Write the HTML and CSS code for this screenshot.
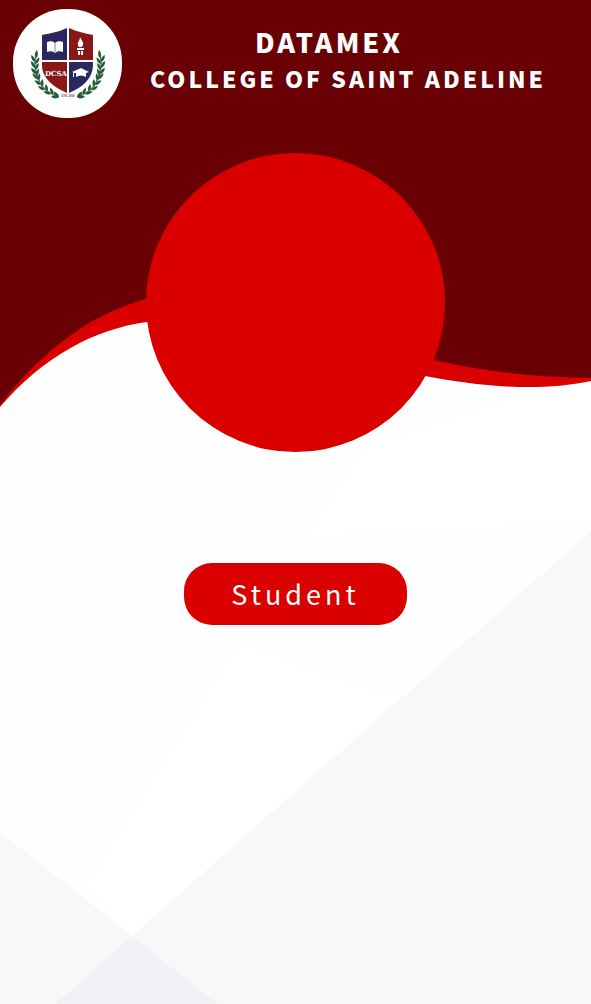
FILE: index.html
```html
<!DOCTYPE html>
<html lang="en">
<head>
<meta charset="utf-8">
<meta name="viewport" content="width=device-width, initial-scale=1">
<title>Datamex College of Saint Adeline</title>
<link rel="stylesheet" href="styles.css">
</head>
<body>
<main class="card">
  <svg class="backdrop" viewBox="0 0 591 1004" preserveAspectRatio="none" aria-hidden="true">
    <path fill="#fefefe" d="M0 300H591V1004H0Z"/>
    <path fill="#fff" d="M240 644L392 700L132 936L88 885ZM365 450L591 370V522L308 536Z"/>
    <path fill="#f8f8fa" d="M591 531L132 936L218 1004H591ZM0 832L132 936L55 1004H0Z"/>
    <path fill="#f2f1f6" d="M132 936L218 1004H55Z"/>
    <path fill="#db0000" d="M0 0H591V381C535 393 472 385 425 376L300 400L147 322C94 329 43 357 0 407Z"/>
    <path fill="#690004" d="M0 0H591V378C538 378 482 371 434 360L300 320L146 299C92 314 44 348 0 405Z"/>
  </svg>
  <header class="header">
    <svg class="logo" viewBox="13 9 109 109" role="img" aria-label="DCSA crest">
      <defs>
        <path id="leaf" d="M0 0C-2-2-2-5 0-8C2-5 2-2 0 0"/>
        <g id="branch" fill="#235c36">
          <path d="M36 54C32 70 39 91 59 97" fill="none" stroke="#235c36"/>
          <use href="#leaf" transform="translate(36 58) rotate(6)"/>
          <use href="#leaf" transform="translate(35 62) rotate(-28)"/>
          <use href="#leaf" transform="translate(35 64) rotate(35)"/>
          <use href="#leaf" transform="translate(35 68) rotate(-30)"/>
          <use href="#leaf" transform="translate(35 70) rotate(28)"/>
          <use href="#leaf" transform="translate(36 74) rotate(-38)"/>
          <use href="#leaf" transform="translate(36 76) rotate(20)"/>
          <use href="#leaf" transform="translate(38 79) rotate(-46)"/>
          <use href="#leaf" transform="translate(38 81) rotate(12)"/>
          <use href="#leaf" transform="translate(41 85) rotate(-54)"/>
          <use href="#leaf" transform="translate(42 87) rotate(2)"/>
          <use href="#leaf" transform="translate(45 90) rotate(-62)"/>
          <use href="#leaf" transform="translate(47 92) rotate(-8)"/>
          <use href="#leaf" transform="translate(51 94) rotate(-72)"/>
          <use href="#leaf" transform="translate(53 95) rotate(-20)"/>
          <use href="#leaf" transform="translate(59 97) rotate(-88)"/>
          <use href="#leaf" transform="translate(59 97) rotate(-46)"/>
        </g>
      </defs>
      <rect x="13" y="9" width="109" height="109" rx="53" fill="#fff"/>
      <use href="#branch"/>
      <use href="#branch" transform="translate(136 0) scale(-1 1)"/>
      <path fill="#fff" d="M41 33L68 27L95 33V65C95 79 84 89 68 95C52 89 41 79 41 65Z"/>
      <path fill="#2b2860" d="M42 35C51 33 59 32 67 28V60H42Z"/>
      <path fill="#8a1717" d="M69 28C77 32 85 33 93 35V60H69Z"/>
      <path fill="#8a1717" d="M42 62H67V93C53 87 42 78 42 65Z"/>
      <path fill="#2b2860" d="M69 62H93V65C93 78 83 87 69 93Z"/>
      <path fill="#fff" d="M47 42C50 41 53 41 55 43C57 41 60 41 63 42V52C60 51 57 51 55 53C53 51 50 51 47 52Z"/>
      <path fill="none" stroke="#2b2860" stroke-width=".6" d="M55 43V52"/>
      <path fill="#fff" d="M80 37C81 40 84 42 83 45C82 48 78 48 78 45C77 42 80 41 80 37ZM77 48H84V50H77ZM78 51H80V55H78ZM81 51H83V55H81Z"/>
      <path fill="#fff" d="M72 72L81 68L89 72L86 73V77Q81 74 76 77V73L74 73V77H73V72Z"/>
      <text class="crest-name" x="56" y="76">DCSA</text>
      <text class="crest-date" x="68" y="97">EST. 2010</text>
    </svg>
    <div class="titles">
      <h1 class="name">DATAMEX</h1>
      <p class="college">COLLEGE OF SAINT ADELINE</p>
    </div>
  </header>
  <div class="portrait"></div>
  <p class="role">Student</p>
</main>
</body>
</html>
```
FILE: styles.css
```css
* { box-sizing: border-box; }

body {
  margin: 0;
  font-family: "Noto Sans CJK SC", "Noto Sans", sans-serif;
  color: #fff;
}

.card {
  position: relative;
  isolation: isolate;
  display: flex;
  flex-direction: column;
  align-items: center;
  min-height: 100vh;
}

.backdrop {
  position: absolute;
  inset: 0;
  z-index: -1;
  width: 100%;
  height: 100%;
}

.header {
  display: flex;
  align-items: flex-start;
  align-self: stretch;
  gap: 28px;
  padding: 9px 13px;
}

.logo {
  flex: none;
  width: 109px;
  height: 109px;
}

.crest-name {
  font: bold 7px "DejaVu Serif", serif;
  fill: #fff;
  text-anchor: middle;
}

.crest-date {
  font: bold 3px "Liberation Serif", serif;
  fill: #8a1717;
  text-anchor: middle;
}

.titles {
  padding-top: 14px;
  white-space: nowrap;
}

.name,
.college {
  margin: 0;
  font-weight: 900;
  letter-spacing: 3px;
  line-height: 37px;
}

.name {
  padding-right: 38px;
  font-size: 27px;
  text-align: center;
}

.college { font-size: 23px; }

.portrait {
  width: 299px;
  height: 299px;
  margin-top: 26px;
  border-radius: 50%;
  background: #db0000;
}

.role {
  margin: 111px 0 0;
  padding: 0 47px;
  border-radius: 28px;
  background: #db0000;
  font-size: 27px;
  letter-spacing: 4px;
  line-height: 62px;
}
```
